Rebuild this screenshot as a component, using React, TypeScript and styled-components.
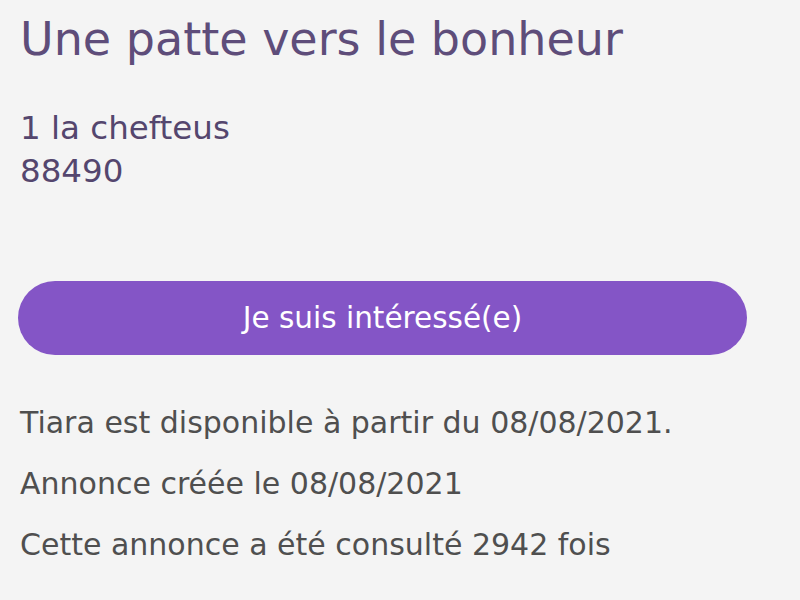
import styled, { createGlobalStyle } from "styled-components";

const GlobalStyle = createGlobalStyle`
  html, body {
    margin: 0;
    padding: 0;
    background: #f4f4f4;
  }
  body {
    font-family: "DejaVu Sans", "Open Sans", sans-serif;
  }
`;

const Page = styled.div`
  width: 800px;
  height: 600px;
  overflow: hidden;
  padding: 0 20px;
  box-sizing: border-box;
  display: flex;
  flex-direction: column;
`;

const Title = styled.h1`
  margin: 11px 0 0;
  font-size: 46px;
  line-height: 56px;
  font-weight: 400;
  white-space: nowrap;
  color: #5e4d7a;
`;

const Address = styled.div`
  margin-top: 40px;
  font-size: 32.5px;
  line-height: 43px;
  color: #54466e;
`;

const Button = styled.button`
  margin-top: 88px;
  margin-left: -2px;
  width: 729px;
  height: 74px;
  border: none;
  border-radius: 37px;
  background: #8455c6;
  color: #fff;
  font-family: inherit;
  font-size: 29.5px;
  cursor: pointer;
`;

const Info = styled.p`
  margin: 0;
  font-size: 30px;
  line-height: 61px;
  white-space: nowrap;
  color: #4f4f4f;
`;

const InfoList = styled.div`
  margin-top: 37px;
`;

export default function App() {
  return (
    <>
      <GlobalStyle />
      <Page>
        <Title>Une patte vers le bonheur</Title>
        <Address>
          1 la chefteus
          <br />
          88490
        </Address>
        <Button>Je suis intéressé(e)</Button>
        <InfoList>
          <Info>Tiara est disponible à partir du 08/08/2021.</Info>
          <Info>Annonce créée le 08/08/2021</Info>
          <Info>Cette annonce a été consulté 2942 fois</Info>
        </InfoList>
      </Page>
    </>
  );
}
